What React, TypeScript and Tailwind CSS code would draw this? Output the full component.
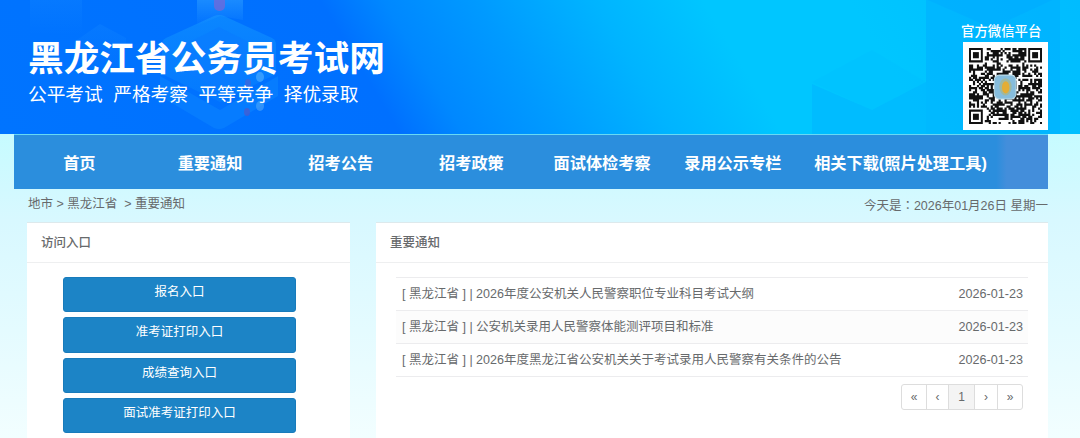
import React, { useState } from 'react';
import clsx from 'clsx';

interface Aviso {
  id: number;
  region: string;
  titulo: string;
  fecha: string;
}

const menu = ['首页', '重要通知', '招考公告', '招考政策', '面试体检考察', '录用公示专栏', '相关下载(照片处理工具)'];

const entradas = ['报名入口', '准考证打印入口', '成绩查询入口', '面试准考证打印入口'];

const lemas = ['公平考试', '严格考察', '平等竞争', '择优录取'];

const avisos: Aviso[] = [
  { id: 1, region: '黑龙江省', titulo: '2026年度公安机关人民警察职位专业科目考试大纲', fecha: '2026-01-23' },
  { id: 2, region: '黑龙江省', titulo: '公安机关录用人民警察体能测评项目和标准', fecha: '2026-01-23' },
  { id: 3, region: '黑龙江省', titulo: '2026年度黑龙江省公安机关关于考试录用人民警察有关条件的公告', fecha: '2026-01-23' },
];

const paginas = [
  { texto: '«', ancho: 'w-[25px]' },
  { texto: '‹', ancho: 'w-[22px]' },
  { texto: '1', ancho: 'w-[26px]' },
  { texto: '›', ancho: 'w-[23px]' },
  { texto: '»', ancho: 'w-[24px]' },
];

const LADO = 37;

// Módulos oscuros del código, sin las tres esquinas
const crearModulos = () => {
  let semilla = 20260;
  let d = '';
  for (let y = 0; y < LADO; y++) {
    for (let x = 0; x < LADO; x++) {
      semilla = (semilla * 1103515 + 12345) % 2147483647;
      const esquina = (x < 8 && y < 8) || (x > 28 && y < 8) || (x < 8 && y > 28);
      if (!esquina && semilla / 2147483647 < 0.55) d += `M${x} ${y}h1.1v1.1h-1.1z`;
    }
  }
  return d;
};

const modulos = crearModulos();

const Esquina: React.FC<{ x: number; y: number }> = ({ x, y }) => (
  <g fill="#111">
    <path fillRule="evenodd" d={`M${x} ${y}h7v7h-7z M${x + 1} ${y + 1}v5h5v-5z`} />
    <rect x={x + 2} y={y + 2} width="3" height="3" />
  </g>
);

const CodigoQR: React.FC = () => (
  <svg className="h-[76px] w-[73px]" viewBox="0 0 37 37" preserveAspectRatio="none">
    <path d={modulos} fill="#111" />
    <Esquina x={0} y={0} />
    <Esquina x={30} y={0} />
    <Esquina x={0} y={30} />
    <rect x="12.8" y="13.2" width="11" height="11.6" rx="2.5" fill="#86bddd" stroke="#b9d9e6" strokeWidth="0.5" />
    <ellipse cx="18.5" cy="18.9" rx="3.1" ry="4.2" fill="#9fb8a0" />
    <ellipse cx="18.6" cy="19.2" rx="1.9" ry="3" fill="#e3ad35" />
  </svg>
);

// Hexágonos translúcidos del fondo de la cabecera
const FondoCabecera: React.FC = () => (
  <svg className="absolute inset-0 h-full w-full" viewBox="0 0 1080 134" preserveAspectRatio="none">
    <defs>
      <linearGradient id="hex" x1="0" y1="0" x2="0" y2="1">
        <stop offset="0" stopColor="#169cff" stopOpacity="0.5" />
        <stop offset="1" stopColor="#0c8cff" stopOpacity="0.3" />
      </linearGradient>
      <linearGradient id="haz" x1="0" y1="0" x2="0" y2="1">
        <stop offset="0" stopColor="#39aaff" stopOpacity="0.45" />
        <stop offset="1" stopColor="#39aaff" stopOpacity="0" />
      </linearGradient>
      <linearGradient id="cubo" x1="0" y1="0" x2="0" y2="1">
        <stop offset="0" stopColor="#1488ff" stopOpacity="0.3" />
        <stop offset="1" stopColor="#1488ff" stopOpacity="0" />
      </linearGradient>
    </defs>
    <path d="M30 0h52v34H30z" fill="url(#cubo)" />
    <path d="M74 42l26-18 26 14v34H74z" fill="url(#cubo)" />
    <path d="M162 44q0-4 4-6l48-22q5-2 10 0l48 22q4 2 4 6v30l-56 28-58-28z" fill="url(#hex)" />
    <path d="M186 44l33-17 33 17v28l-33 18-33-18z" fill="#0a7cff" opacity="0.6" />
    <path d="M160 76l60 34 58-34v20l-54 32q-5 2-10 0l-54-32z" fill="#1496ff" opacity="0.3" />
    <path d="M197 0h46v20l-23-4-23 10z" fill="url(#haz)" />
    <rect x="214" y="-8" width="11" height="19" rx="5" fill="#7468d8" opacity="0.75" />
    <ellipse cx="248" cy="83" rx="3" ry="4" fill="#605cc5" opacity="0.5" />
    <ellipse cx="260" cy="77" rx="4" ry="5" fill="#5cb7ff" opacity="0.55" />
    <ellipse cx="247" cy="112" rx="3" ry="4" fill="#4f58cb" opacity="0.7" />
    <ellipse cx="260" cy="106" rx="4" ry="5" fill="#55acf8" opacity="0.55" />
    <path d="M812 82l60-32 54 32-54 28z" fill="#00b4ff" opacity="0.15" />
    <path d="M812 84l60 26 54-28v52H812z" fill="#00a4ff" opacity="0.3" />
    <path d="M926 0h134v134H926z" fill="#00a4ff" opacity="0.36" />
    <path d="M928 0h124l-60 28z" fill="#00a0ff" opacity="0.25" />
  </svg>
);

const Cabecera: React.FC = () => (
  <header className="relative h-[134px] bg-[linear-gradient(59deg,#0074ff_0%,#0070ff_34.5%,#0088ff_40%,#009aff_48%,#00b4ff_58%,#00c6ff_67.5%,#00c6ff_80%,#00bcff_100%)]">
    <FondoCabecera />
    <div className="relative flex justify-between pl-7 pr-8">
      <div className="pt-[39px] text-white">
        <h1 className="whitespace-nowrap text-[35.7px] font-bold leading-[40px]">黑龙江省公务员考试网</h1>
        <p className="mt-[2px] flex gap-[10.5px] font-['Kaiti_SC','STKaiti','KaiTi','Noto_Sans_CJK_SC',sans-serif] text-[18.7px] leading-6">
          {lemas.map((lema) => (
            <span key={lema}>{lema}</span>
          ))}
        </p>
      </div>
      <div className="flex w-[85px] flex-col pt-[23px]">
        <span className="-ml-[2px] whitespace-nowrap text-[13.4px] font-medium leading-[18px] text-white">官方微信平台</span>
        <div className="mt-px flex h-[88px] justify-center bg-white pt-[6px]">
          <CodigoQR />
        </div>
      </div>
    </div>
  </header>
);

const Panel: React.FC<{ titulo: string; className: string; children: React.ReactNode }> = ({ titulo, className, children }) => (
  <section className={clsx('h-[230px] border-t border-[#dde9ec] bg-white', className)}>
    <h2 className="h-10 border-b border-[#eeeff0] pl-[14px] text-[12.5px] font-medium leading-[40px] text-[#676a6c]">{titulo}</h2>
    {children}
  </section>
);

const App: React.FC = () => {
  const [paginaActual] = useState('1');

  return (
    <div className="h-[438px] w-[1080px] overflow-hidden bg-[linear-gradient(180deg,#c6fbff_134px,#d8f8ff_220px,#e4fbff_330px,#f2feff_438px)] font-['Liberation_Sans','Noto_Sans_CJK_SC',sans-serif] text-[12.5px] text-[#676a6c]">
      <Cabecera />

      {/* Menú principal */}
      <nav className="ml-[14px] mr-8 flex h-[55px] border-t border-[#68d9f4] bg-[linear-gradient(90deg,#2b8edd_0%,#2b8edd_95%,#438edb_96%)] text-[16.2px] font-bold leading-[56px] text-white">
        {menu.map((item) => (
          <a key={item} href="#" className="min-w-[130.7px] whitespace-nowrap px-[16px] text-center">
            {item}
          </a>
        ))}
      </nav>

      {/* Ruta y fecha */}
      <div className="flex h-[33px] justify-between pl-[28px] pr-8 leading-[31px]">
        <div className="whitespace-pre">{'地市 > 黑龙江省  > 重要通知'}</div>
        <div>
          今天是<span className="font-['Noto_Sans_CJK_TC',sans-serif]">：</span>2026年01月26日 星期一
        </div>
      </div>

      <main className="flex justify-between pl-[27px] pr-8">
        <Panel titulo="访问入口" className="w-[323px]">
          <div className="flex flex-col gap-[5px] pl-9 pt-[14px]">
            {entradas.map((entrada) => (
              <button
                key={entrada}
                className="h-[35.3px] w-[233px] rounded-[3px] border border-[#187bbb] bg-[#1c84c6] pb-[5px] leading-[28px] text-white"
              >
                {entrada}
              </button>
            ))}
          </div>
        </Panel>

        <Panel titulo="重要通知" className="w-[672px]">
          <div className="pl-5 pr-5 pt-[14px]">
            <ul className="border-b border-[#ececee]">
              {avisos.map((aviso) => (
                <li key={aviso.id} className="flex h-[33px] justify-between border-t border-[#ececee] pl-[6px] pr-[5px] leading-[32px] even:bg-[#fcfcfc]">
                  <a href="#">
                    [ {aviso.region} ] | {aviso.titulo}
                  </a>
                  <span className="text-[12.6px]">{aviso.fecha}</span>
                </li>
              ))}
            </ul>
            <div className="mt-[7px] flex justify-end pr-[5px]">
              <div className="flex h-[26px] divide-x divide-[#dddddd] overflow-hidden rounded-[3px] border border-[#dddddd]">
                {paginas.map((pagina) => (
                  <button
                    key={pagina.texto}
                    className={clsx('text-[12px] leading-6', pagina.ancho, pagina.texto === paginaActual && 'bg-[#f4f4f4]')}
                  >
                    {pagina.texto}
                  </button>
                ))}
              </div>
            </div>
          </div>
        </Panel>
      </main>
    </div>
  );
};

export default App;
